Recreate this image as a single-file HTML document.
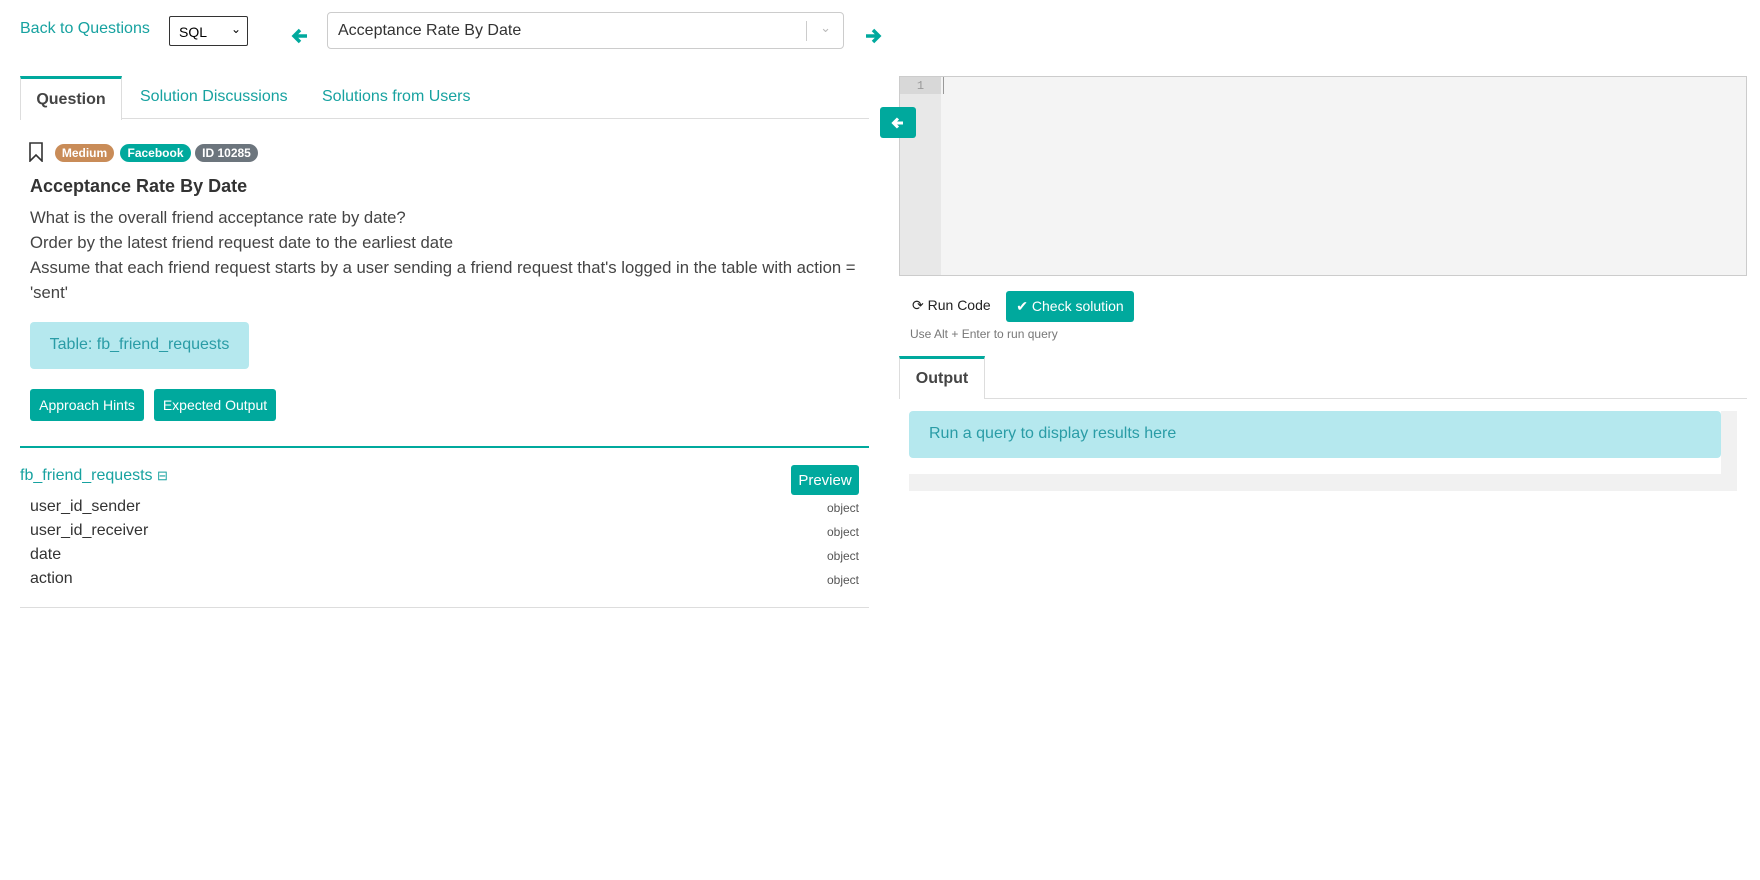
<!DOCTYPE html>
<html><head><meta charset="utf-8"><style>
*{box-sizing:border-box;margin:0;padding:0}
body{width:1760px;height:880px;background:#fff;font-family:"Liberation Sans",Arial,sans-serif;color:#333;position:relative;overflow:hidden}
.a{position:absolute;white-space:nowrap}
.teal{color:#17a2a0}
.btn{position:absolute;background:#00a99d;color:#fff;border-radius:3px;font-size:14px;display:flex;align-items:center;justify-content:center}
.badge{position:absolute;top:144px;height:18px;border-radius:9px;color:#fff;font-size:12px;font-weight:bold;display:flex;align-items:center;justify-content:center}
.row{position:absolute;left:30px;width:829px;font-size:16px}
.row span{position:absolute;right:0;top:3px;font-size:12px;color:#555}
</style></head><body>
<div class="a teal" style="left:20px;top:20px;font-size:16px">Back to Questions</div>
<div class="a" style="left:169px;top:16px;width:79px;height:30px;border:1px solid #333;border-radius:2px;font-size:14px;padding:7px 0 0 9px;color:#000">SQL<span style="position:absolute;right:6px;top:5px;font-size:12px">&#8964;</span></div>
<svg class="a" style="left:291px;top:27px" width="18" height="18" viewBox="0 0 18 18"><path d="M16 9H4M9 3L3 9l6 6" stroke="#00a99d" stroke-width="3.5" fill="none"/></svg>
<div class="a" style="left:327px;top:12px;width:517px;height:37px;border:1px solid #ccc;border-radius:4px;font-size:16px;padding:9px 0 0 10px">Acceptance Rate By Date<span style="position:absolute;right:36px;top:8px;width:1px;height:20px;background:#ccc"></span><span style="position:absolute;right:12px;top:7px;color:#bbb;font-size:13px">&#8964;</span></div>
<svg class="a" style="left:864px;top:27px" width="18" height="18" viewBox="0 0 18 18"><path d="M2 9h12M9 3l6 6-6 6" stroke="#00a99d" stroke-width="3.5" fill="none"/></svg>

<div class="a" style="left:20px;top:118px;width:849px;height:1px;background:#ddd"></div>
<div class="a" style="left:20px;top:76px;width:102px;height:44px;border:1px solid #ddd;border-top:3px solid #00a99d;border-bottom:none;background:#fff;font-size:16px;font-weight:bold;text-align:center;padding-top:12px;color:#444">Question</div>
<div class="a teal" style="left:140px;top:88px;font-size:16px">Solution Discussions</div>
<div class="a teal" style="left:322px;top:88px;font-size:16px">Solutions from Users</div>

<svg class="a" style="left:29px;top:142px" width="14" height="20" viewBox="0 0 14 20"><path d="M1 1h12v18l-6-6-6 6z" stroke="#333" stroke-width="1.6" fill="none"/></svg>
<div class="badge" style="left:55px;width:59px;background:#c98c58">Medium</div>
<div class="badge" style="left:120px;width:71px;background:#00a99d">Facebook</div>
<div class="badge" style="left:195px;width:63px;background:#6c757d">ID 10285</div>
<div class="a" style="left:30px;top:176px;font-size:18px;font-weight:bold;color:#333">Acceptance Rate By Date</div>
<div class="a" style="left:30px;top:205px;font-size:16.7px;line-height:25px;color:#444">What is the overall friend acceptance rate by date?<br>Order by the latest friend request date to the earliest date<br>Assume that each friend request starts by a user sending a friend request that's logged in the table with action =<br>'sent'</div>
<div class="a" style="left:30px;top:322px;width:219px;height:47px;background:#b5e8ee;border-radius:4px;color:#2a9ca6;font-size:16px;padding-top:14px;text-align:center">Table: fb_friend_requests</div>
<div class="btn" style="left:30px;top:389px;width:114px;height:32px">Approach Hints</div>
<div class="btn" style="left:154px;top:389px;width:122px;height:32px">Expected Output</div>
<div class="a" style="left:20px;top:446px;width:849px;height:2px;background:#00a99d"></div>
<div class="a teal" style="left:20px;top:467px;font-size:16px">fb_friend_requests <span style="font-size:13px">&#8863;</span></div>
<div class="btn" style="left:791px;top:465px;width:68px;height:30px;font-size:15px">Preview</div>
<div class="row" style="top:498px">user_id_sender<span>object</span></div>
<div class="row" style="top:522px">user_id_receiver<span>object</span></div>
<div class="row" style="top:546px">date<span>object</span></div>
<div class="row" style="top:570px">action<span>object</span></div>
<div class="a" style="left:20px;top:607px;width:849px;height:1px;background:#ddd"></div>

<div class="a" style="left:899px;top:76px;width:848px;height:200px;border:1px solid #ccc;background:#f4f4f4"></div>
<div class="a" style="left:900px;top:77px;width:41px;height:198px;background:#e8e8e8"></div>
<div class="a" style="left:900px;top:77px;width:41px;height:17px;background:#d8d8d8;color:#999;font-family:'Liberation Mono',monospace;font-size:12px;text-align:center;padding-top:2px">1</div>
<div class="a" style="left:943px;top:77px;width:1px;height:17px;background:#999"></div>
<div class="btn" style="left:880px;top:107px;width:36px;height:31px"><svg width="14" height="14" viewBox="0 0 14 14"><path d="M12 7H3M7 2.5L2.5 7 7 11.5" stroke="#fff" stroke-width="3" fill="none"/></svg></div>
<div class="a" style="left:912px;top:297px;font-size:14px;color:#222">&#10227; Run Code</div>
<div class="btn" style="left:1006px;top:291px;width:128px;height:31px;font-size:14px">&#10004; Check solution</div>
<div class="a" style="left:910px;top:327px;font-size:12px;color:#777">Use Alt + Enter to run query</div>
<div class="a" style="left:899px;top:398px;width:848px;height:1px;background:#ddd"></div>
<div class="a" style="left:899px;top:356px;width:86px;height:43px;border:1px solid #ddd;border-top:3px solid #00a99d;border-bottom:none;background:#fff;font-size:16px;font-weight:bold;text-align:center;padding-top:11px;color:#444">Output</div>
<div class="a" style="left:909px;top:411px;width:812px;height:47px;background:#b5e8ee;border-radius:4px;color:#2a9ca6;font-size:16px;padding:14px 0 0 20px">Run a query to display results here</div>
<div class="a" style="left:1721px;top:411px;width:16px;height:80px;background:#f1f1f1"></div>
<div class="a" style="left:909px;top:474px;width:812px;height:17px;background:#f1f1f1"></div>
</body></html>
